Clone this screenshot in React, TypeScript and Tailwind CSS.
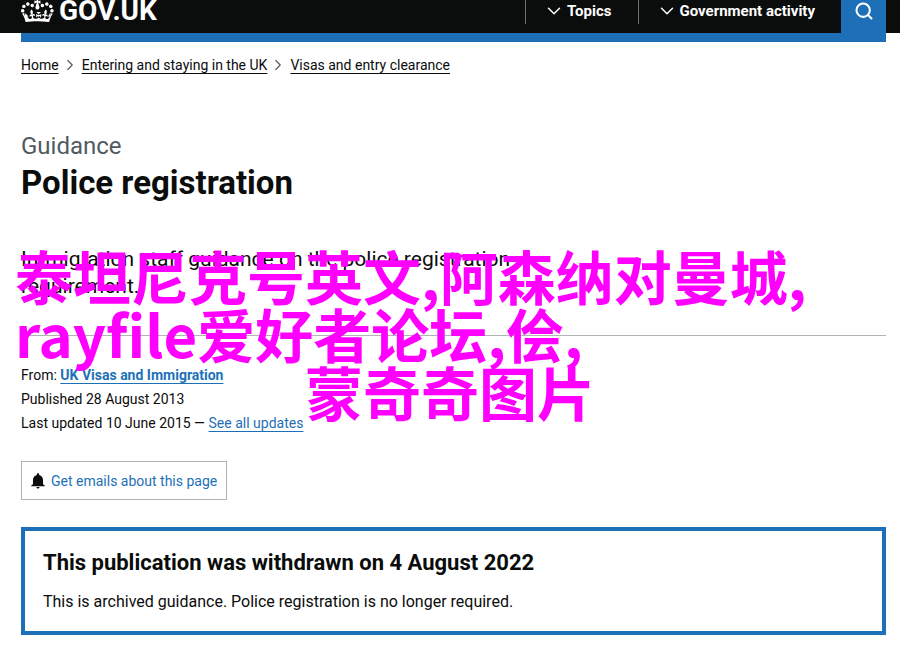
import { ChevronDown, ChevronRight, Search } from 'lucide-react';

const breadcrumbs = [
    'Home',
    'Entering and staying in the UK',
    'Visas and entry clearance',
];

const menus = ['Topics', 'Government activity'];

const CrownIcon = () => (
    <svg viewBox="0 6 36 24" className="h-[22px] w-[33px] shrink-0" fill="currentColor" aria-hidden="true">
        <path d="M6.7 12.2c1 .4 2.1-.1 2.5-1s-.1-2.1-1-2.5c-1-.4-2.1.1-2.5 1-.4 1 0 2.1 1 2.5m-4.3 2.5c1 .4 2.1-.1 2.5-1s-.1-2.1-1-2.5c-1-.4-2.1.1-2.5 1-.5 1 0 2.1 1 2.5m-1.3 4.8c1 .4 2.1-.1 2.5-1 .4-1-.1-2.1-1-2.5-1-.4-2.1.1-2.5 1-.4 1 0 2.1 1 2.5m10.4-5.8c1 .4 2.1-.1 2.5-1s-.1-2.1-1-2.5c-1-.4-2.1.1-2.5 1s0 2.1 1 2.5m17.4-1.5c-1 .4-2.1-.1-2.5-1s.1-2.1 1-2.5c1-.4 2.1.1 2.5 1 .5 1 0 2.1-1 2.5m4.3 2.5c-1 .4-2.1-.1-2.5-1s.1-2.1 1-2.5c1-.4 2.1.1 2.5 1 .5 1 0 2.1-1 2.5m1.3 4.8c-1 .4-2.1-.1-2.5-1-.4-1 .1-2.1 1-2.5 1-.4 2.1.1 2.5 1 .4 1 0 2.1-1 2.5m-10.4-5.8c-1 .4-2.1-.1-2.5-1s.1-2.1 1-2.5c1-.4 2.1.1 2.5 1s0 2.1-1 2.5m-5.3-4.9 2.4 1.3V6.5l-2.4.8c-.1-.1-.1-.2-.2-.2s1-3 1-3h-3.4l1 3c-.1.1-.2.1-.2.2-.1.1-2.4-.7-2.4-.7v3.5L17 8.8c.1.1.1.2.2.2l-1.4 4.5c-.1.2-.1.4-.1.6 0 1.1.8 2 1.9 2.2h.7c1-.2 1.9-1.1 1.9-2.1 0-.2 0-.4-.1-.6l-1.3-4.4c-.1-.2 0-.2.1-.3m-1 20.3c4.6 0 8.9.3 12.8.9 1.1-4.6 2.4-7.2 3.8-9.1l-2.6-.9c.3 1.3.3 1.9 0 2.8-.4-.4-.8-1.2-1.1-2.4l-1.2 4.2c.8-.5 1.4-.9 2-.9-1.2 2.6-2.7 3.2-3.6 3-1.2-.2-1.7-1.3-1.5-2.2.3-1.3 1.6-1.6 2.2-.1 1.2-2.4-.8-3.1-2.1-2.4 1.9-1.9 2.2-3.6.6-5.7-2.2 1.7-2.2 3.3-1.2 5.6-1.3-1.5-3.3-.7-2.5 1.7.9-1.4 2.1-.5 2 .8-.2 1.2-1.7 2.1-3.7 1.9-2.8-.3-2.9-2.2-3-3.1.7-.1 1.9.5 3 2l.4-4.4c-1.1 1.2-2.2 1.4-3.2 1.4.4-1.2 3-3.1 3-3.1h-5.4s2.6 1.9 3 3.1c-1 0-2.1-.2-3.2-1.4l.4 4.4c1.1-1.5 2.3-2.1 3-2-.1.9-.2 2.8-3 3.1-1.9.2-3.5-.7-3.7-1.9-.2-1.3 1-2.2 1.9-.8.7-2.4-1.3-3.1-2.6-1.7 1-2.3 1-4-1.2-5.6-1.6 2.1-1.3 3.8.6 5.7-1.3-.7-3.2 0-2.1 2.4.6-1.5 1.9-1.1 2.2.1.2.9-.4 1.9-1.5 2.2-1 .2-2.5-.5-3.6-3 .7 0 1.3.4 2 .9L5 20.4c-.3 1.2-.7 1.9-1.2 2.4-.3-.8-.2-1.5 0-2.8l-2.6.9C2.7 22.8 4 25.4 5.1 30c3.8-.5 8.2-.9 12.7-.9" />
    </svg>
);

const BellIcon = () => (
    <svg viewBox="0 0 459 500" className="h-4 w-[14px] shrink-0" fill="currentColor" aria-hidden="true">
        <path d="M177 448c0 28 24 51 52 51s52-23 52-51H177zm217-90V217c0-82-52-146-127-163V38c0-21-17-38-38-38s-38 17-38 38v16C116 71 64 135 64 217v141L8 398v26h443v-26l-57-40z" />
    </svg>
);

const Header = () => (
    <header className="bg-[#0b0c0c] pl-[21px] pr-[14px] text-white">
        <div className="flex h-[33px] items-start justify-between">
            <a href="#home" className="flex items-start gap-[5px]">
                <CrownIcon />
                <span className="text-[28px] font-bold leading-[22px]">GOV.UK</span>
            </a>
            <nav className="flex h-full items-start text-[15px] font-bold">
                {menus.map((menu) => (
                    <button key={menu} type="button" className="flex h-6 items-center gap-[2px] border-l border-[#6b6e70] pb-[2px] pl-[17px] pr-[26px]">
                        <ChevronDown className="h-[22px] w-[22px]" strokeWidth={1.6} />
                        {menu}
                    </button>
                ))}
                <button type="button" aria-label="Search" className="flex h-full w-[45px] justify-center bg-[#1d70b8]">
                    <Search className="mt-[1px] h-5 w-5" strokeWidth={2.5} />
                </button>
            </nav>
        </div>
    </header>
);

const App = () => {
    return (
        <div className="relative min-h-screen bg-white font-[Roboto,'Noto_Sans_CJK_SC',sans-serif] text-[#0b0c0c]">
            <Header />

            <div className="pl-[21px] pr-[14px]">
                <div className="h-[9px] bg-[#1d70b8]" />

                <nav aria-label="Breadcrumb" className="mt-[13px]">
                    <ol className="flex items-center text-sm leading-5">
                        {breadcrumbs.map((crumb, index) => (
                            <li key={crumb} className="flex items-center">
                                {index > 0 && <ChevronRight className="ml-[2px] mr-[3px] h-[18px] w-[18px] text-[#505a5f]" strokeWidth={1.5} />}
                                <a href="#crumb" className="underline underline-offset-3">{crumb}</a>
                            </li>
                        ))}
                    </ol>
                </nav>

                <main>
                    <p className="mt-[56px] text-2xl leading-[30px] text-[#505a5f]">Guidance</p>
                    <h1 className="text-[33px] font-bold leading-[44px]">Police registration</h1>
                    <p className="mt-[41px] max-w-[540px] text-[21px] leading-[27px]">
                        Immigration staff guidance on the police registration requirement.
                    </p>

                    {/* publication details */}
                    <div className="mt-[35px] border-t border-[#b1b4b6] pt-[27px] text-sm leading-[24px]">
                        <p>
                            From:{' '}
                            <a href="#ukvi" className="font-bold text-[#1d70b8] underline underline-offset-3">UK Visas and Immigration</a>
                        </p>
                        <p>Published 28 August 2013</p>
                        <p>
                            Last updated 10 June 2015 —{' '}
                            <a href="#history" className="text-[#1d70b8] underline underline-offset-3">See all updates</a>
                        </p>
                    </div>

                    <button type="button" className="mt-[26px] flex h-[39px] items-center gap-[6px] border border-[#b1b4b6] px-[9px] text-sm">
                        <BellIcon />
                        <span className="text-[#1d70b8]">Get emails about this page</span>
                    </button>

                    <section className="mt-[27px] border-4 border-[#1d70b8] p-[18px]">
                        <h2 className="text-[22px] font-bold leading-7">This publication was withdrawn on 4 August 2022</h2>
                        <p className="mt-[14px] text-base leading-[22px]">
                            This is archived guidance. Police registration is no longer required.
                        </p>
                    </section>
                </main>
            </div>

            {/* caption laid over the page */}
            <div className="pointer-events-none absolute inset-x-[15px] top-[246px] font-['Noto_Sans_CJK_SC',sans-serif] text-[58px] font-bold leading-[58px] text-[#ff00ff]">
                <p className="whitespace-nowrap">泰坦尼克号英文,阿森纳对曼城,</p>
                <p className="whitespace-nowrap">rayfile爱好者论坛,侩,</p>
                <p className="text-center">蒙奇奇图片</p>
            </div>
        </div>
    );
};

export default App;
